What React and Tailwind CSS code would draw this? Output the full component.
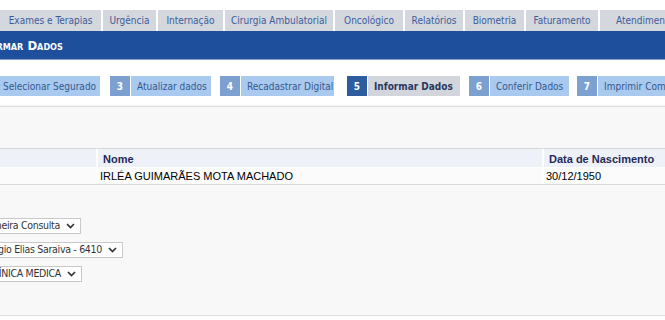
import React from "react";

const TAHOMA = { fontFamily: "'DejaVu Sans Condensed', 'Liberation Sans', sans-serif" };
const ARIAL = { fontFamily: "'Liberation Sans', Arial, sans-serif" };

const tabs = [
  { label: "Exames e Terapias", w: "w-[101px]" },
  { label: "Urgência", w: "w-[53px]" },
  { label: "Internação", w: "w-[65px]" },
  { label: "Cirurgia Ambulatorial", w: "w-[108px]" },
  { label: "Oncológico", w: "w-[68px]" },
  { label: "Relatórios", w: "w-[58px]" },
  { label: "Biometria", w: "w-[59px]" },
  { label: "Faturamento", w: "w-[72px]" },
  { label: "Atendimento", w: "w-[90px]" },
];

const steps = [
  { n: 2, label: "Selecionar Segurado", ml: "ml-0", w: "w-[103px]" },
  { n: 3, label: "Atualizar dados", ml: "ml-[10px]", w: "w-[80px]" },
  { n: 4, label: "Recadastrar Digital", ml: "ml-[9px]", w: "w-[93px]" },
  { n: 5, label: "Informar Dados", ml: "ml-[13px]", w: "w-[92px]", active: true },
  { n: 6, label: "Conferir Dados", ml: "ml-[9px]", w: "w-[79px]" },
  { n: 7, label: "Imprimir Comprovante", ml: "ml-[8px]", w: "w-[120px]" },
];

function Chevron() {
  return (
    <svg width="9" height="6" viewBox="0 0 9 6" className="shrink-0">
      <path d="M1 1 L4.5 4.5 L8 1" fill="none" stroke="#333" strokeWidth="1.7" />
    </svg>
  );
}

function FakeSelect({ text, ml, w }) {
  return (
    <div
      className={`${ml} ${w} h-[16px] flex items-center justify-end gap-[6px] pr-[5px] border border-[#c9c9c9] bg-white text-[10.5px] tracking-[-0.3px] text-[#333] whitespace-nowrap overflow-hidden`}
      style={TAHOMA}
    >
      <span>{text}</span>
      <Chevron />
    </div>
  );
}

export default function App() {
  return (
    <div className="w-[665px] h-[320px] overflow-hidden bg-white flex flex-col">
      <div className="h-[10px] shrink-0" />

      {/* main menu tabs */}
      <div className="flex gap-[2px] h-[21px] shrink-0" style={TAHOMA}>
        {tabs.map((t) => (
          <div
            key={t.label}
            className={`${t.w} shrink-0 bg-[#d4d7de] text-[#3a5c9b] text-[10px] flex items-center justify-center whitespace-nowrap`}
          >
            {t.label}
          </div>
        ))}
      </div>

      {/* title bar */}
      <div className="h-[29px] shrink-0 bg-[#1e4f9c] border-b border-[#86a0cf] flex items-center">
        <span
          className="-ml-[27px] pt-[1px] text-white font-bold text-[13px] whitespace-nowrap"
          style={{ ...TAHOMA, fontVariant: "small-caps" }}
        >
          Informar Dados
        </span>
      </div>

      {/* wizard steps */}
      <div className="mt-[16px] h-[20px] shrink-0 flex -ml-[24px] text-[10px] whitespace-nowrap" style={TAHOMA}>
        {steps.map((s) => (
          <div key={s.n} className={`${s.ml} flex gap-[1px] shrink-0`}>
            <div
              className={`w-[20px] flex items-center justify-center font-bold text-white ${
                s.active ? "bg-[#2e5d9f]" : "bg-[#7ca0cf]"
              }`}
            >
              {s.n}
            </div>
            <div
              className={`${s.w} flex items-center pl-[6px] ${
                s.active ? "bg-[#d3d5dc] text-[#27395f] font-bold" : "bg-[#a9c9ee] text-[#34588f]"
              }`}
            >
              {s.label}
            </div>
          </div>
        ))}
      </div>

      {/* content panel */}
      <div className="mt-[10px] h-[210px] shrink-0 bg-[#f8f8f8] border-t border-b border-[#dedede] shadow-[0_-1px_1px_rgba(0,0,0,0.04)] flex flex-col">
        <div className="mt-[41px] border-t border-b border-[#d8d8d8] flex flex-col gap-[1px] bg-white" style={ARIAL}>
          <div className="flex gap-[2px] h-[18px] text-[11px] font-bold text-[#1f2a5a]">
            <div className="w-[96px] bg-[#eef2f8]" />
            <div className="flex-1 bg-[#eef2f8] pl-[5px] pt-[2px] flex items-center">Nome</div>
            <div className="w-[121px] bg-[#eef2f8] pl-[5px] pt-[2px] flex items-center">Data de Nascimento</div>
          </div>
          <div className="flex gap-[2px] h-[16px] text-[11px] text-black">
            <div className="w-[96px] bg-[#fbfbfb]" />
            <div className="flex-1 bg-[#fbfbfb] pl-[2px] flex items-center">IRLÉA GUIMARÃES MOTA MACHADO</div>
            <div className="w-[121px] bg-[#fbfbfb] pl-[2px] flex items-center">30/12/1950</div>
          </div>
        </div>

        <div className="mt-[33px] flex flex-col gap-[8px]">
          <FakeSelect text="Primeira Consulta" ml="-ml-[40px]" w="w-[121px]" />
          <FakeSelect text="Sérgio Elias Saraiva - 6410" ml="-ml-[40px]" w="w-[163px]" />
          <FakeSelect text="CLÍNICA MEDICA" ml="-ml-[40px]" w="w-[122px]" />
        </div>
      </div>
    </div>
  );
}
